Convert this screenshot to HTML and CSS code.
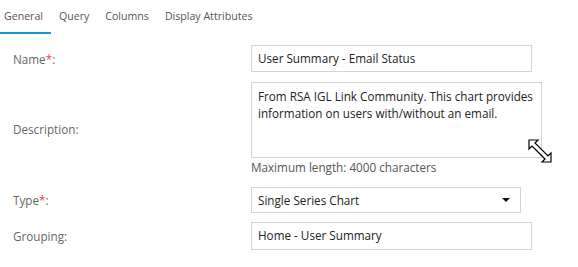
FILE: index.html
```html
<!DOCTYPE html>
<html lang="en">
<head>
    <meta charset="UTF-8">
    <title>Chart Properties</title>
    <link rel="stylesheet" href="styles.css">
</head>
<body>
    <div id="tabs">
        <div class="tab active">General</div>
        <div class="tab">Query</div>
        <div class="tab">Columns</div>
        <div class="tab">Display Attributes</div>
    </div>
    <div id="form">
        <div class="row row-name">
            <label>Name<span class="req">*</span>:</label>
            <div class="field input">User Summary - Email Status</div>
        </div>
        <div class="row row-desc">
            <label>Description:</label>
            <div class="field-wrap">
                <div class="field textarea">From RSA IGL Link Community. This chart provides information on users with/without an email.</div>
                <div class="hint">Maximum length: 4000 characters</div>
                <svg class="resize-cursor" width="26" height="26" viewBox="0 0 26 26">
                    <path d="M1 1 L10 1 L7 4 L20 17 L23 14 L23 23 L14 23 L17 20 L4 7 L1 10 Z" fill="#fff" stroke="#000" stroke-width="1.2" stroke-linejoin="miter"/>
                    <path d="M7.5 9.5 L16.5 18.5" stroke="#999" stroke-width="1"/>
                </svg>
            </div>
        </div>
        <div class="row row-type">
            <label>Type<span class="req">*</span>:</label>
            <div class="field select">
                <span>Single Series Chart</span>
                <span class="caret"></span>
            </div>
        </div>
        <div class="row row-group">
            <label>Grouping:</label>
            <div class="field input">Home - User Summary</div>
        </div>
    </div>
</body>
</html>
```

FILE: styles.css
```css
body {
    font-family: "Open Sans", "Noto Sans", sans-serif;
    margin: 0;
    padding: 0;
    background: #fff;
    color: #333;
}
#tabs {
    display: flex;
    height: 34px;
    font-size: 10.6px;
    color: #555;
}
.tab {
    padding: 9px 8px 0 8px;
}
.tab:first-child {
    padding-left: 4px;
}
.tab.active {
    color: #555;
    border-bottom: 2px solid #1797d4;
    height: 23px;
    width: 39px;
}
#form {
    padding-top: 11px;
}
.row {
    display: grid;
    grid-template-columns: 251px auto;
    align-items: center;
}
.row label {
    font-size: 11.7px;
    color: #666;
    padding-left: 13px;
}
.req {
    color: #e8453c;
}
.field {
    box-sizing: border-box;
    border: 1px solid #d4d4d4;
    font-size: 11.7px;
    color: #222;
    padding: 0 6px;
}
.input {
    width: 281px;
    height: 27px;
    line-height: 25px;
}
.row-desc {
    margin-top: 10px;
}
.field-wrap {
    position: relative;
}
.textarea {
    width: 291px;
    height: 76px;
    padding-top: 5px;
    line-height: 17px;
}
.hint {
    font-size: 11.7px;
    color: #555;
    margin-top: 1px;
    line-height: 16px;
}
.resize-cursor {
    position: absolute;
    left: 277px;
    top: 57px;
}
.row-type {
    margin-top: 12px;
}
.select {
    width: 270px;
    height: 26px;
    display: flex;
    align-items: center;
    justify-content: space-between;
    padding-right: 10px;
}
.caret {
    width: 0;
    height: 0;
    border-left: 4px solid transparent;
    border-right: 4px solid transparent;
    border-top: 4px solid #111;
}
.row-group {
    margin-top: 9px;
}
.row-group .input {
    height: 28px;
}
```
